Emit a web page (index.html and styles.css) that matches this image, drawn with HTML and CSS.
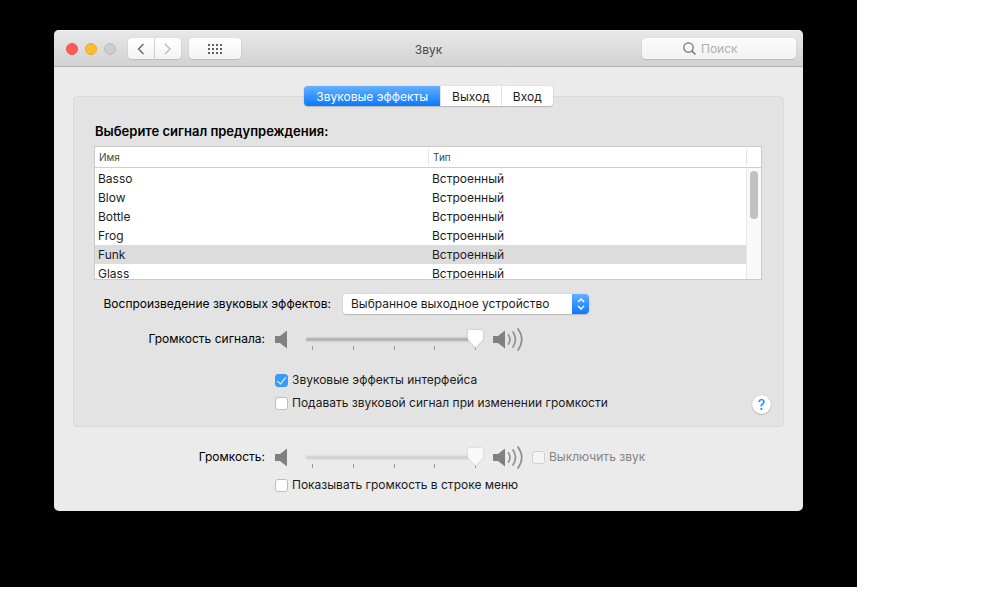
FILE: index.html
```html
<!DOCTYPE html>
<html lang="ru">
<head>
<meta charset="utf-8">
<title>Звук</title>
<link rel="stylesheet" href="styles.css">
</head>
<body>
<svg class="defs" aria-hidden="true">
  <symbol id="quiet" viewBox="0 0 32 24"><path d="M0 9h5l7-5.500v18L5 16H0z" fill="#808080"/></symbol>
  <symbol id="loud" viewBox="0 0 32 24"><path d="M0 9h5l7-5.500v18L5 16H0z" fill="#808080"/><path d="M15.500 8q3 4.500 0 9M20 5q5 7.500 0 15M25 2q7.500 10.500 0 21" fill="none" stroke="#909090" stroke-width="1.700" stroke-linecap="round"/></symbol>
</svg>
<div class="desktop">
  <main class="window">
    <header class="titlebar">
      <div class="lights">
        <button class="light red" aria-label="Закрыть"></button>
        <button class="light yellow" aria-label="Свернуть"></button>
        <button class="light" aria-label="Увеличить" disabled></button>
      </div>
      <div class="nav">
        <button class="tool" aria-label="Назад"><svg width="8" height="12" viewBox="0 0 8 12"><path d="M6.500 1 1.500 6l5 5" fill="none" stroke="#666" stroke-width="1.400"/></svg></button>
        <button class="tool" aria-label="Вперед" disabled><svg width="8" height="12" viewBox="0 0 8 12"><path d="M1 1l5 5-5 5" fill="none" stroke="#b8b8b8" stroke-width="1.400"/></svg></button>
      </div>
      <button class="tool all" aria-label="Показать все"><svg width="14" height="10" viewBox="0 0 14 10"><path d="M0 1h14M0 5h14M0 9h14" stroke="#606060" stroke-width="2" stroke-dasharray="2 2"/></svg></button>
      <h1 class="title">Звук</h1>
      <label class="search"><svg width="13" height="13" viewBox="0 0 13 13"><circle cx="5.500" cy="5.500" r="4.700" fill="none" stroke="#707070" stroke-width="1.200"/><path d="m9 9 3.500 3.500" stroke="#707070" stroke-width="1.400"/></svg><input type="text" placeholder="Поиск" aria-label="Поиск"></label>
    </header>
    <div class="content">
      <div class="tabs" role="tablist">
        <button class="tab active" role="tab" aria-selected="true">Звуковые эффекты</button>
        <button class="tab" role="tab">Выход</button>
        <button class="tab" role="tab">Вход</button>
      </div>
      <section class="panel">
        <h2 class="heading">Выберите сигнал предупреждения:</h2>
        <div class="listbox">
          <table class="sounds">
            <colgroup><col class="col-name"><col><col class="col-scroll"></colgroup>
            <thead><tr><th><span>Имя</span></th><th><span>Тип</span></th><th><span></span></th></tr></thead>
            <tbody>
              <tr><td>Basso</td><td>Встроенный</td><td></td></tr>
              <tr><td>Blow</td><td>Встроенный</td><td></td></tr>
              <tr><td>Bottle</td><td>Встроенный</td><td></td></tr>
              <tr><td>Frog</td><td>Встроенный</td><td></td></tr>
              <tr class="selected"><td>Funk</td><td>Встроенный</td><td></td></tr>
              <tr><td>Glass</td><td>Встроенный</td><td></td></tr>
            </tbody>
          </table>
          <div class="scrollbar"><div class="knob"></div></div>
        </div>
        <div class="output">
          <label class="source" for="device">Воспроизведение звуковых эффектов:</label>
          <div class="popup">
            <select id="device"><option>Выбранное выходное устройство</option></select>
            <span class="arrows"><svg width="8" height="12" viewBox="0 0 8 12"><path d="m1 4 3-3 3 3M1 8l3 3 3-3" fill="none" stroke="#fff" stroke-width="1.400"/></svg></span>
          </div>
        </div>
        <div class="row">
          <label class="name" for="alert">Громкость сигнала:</label>
          <svg class="quiet" width="32" height="24"><use href="#quiet"/></svg>
          <div class="slider"><input id="alert" type="range" value="100"><div class="ticks"><i></i><i></i><i></i><i></i><i></i></div></div>
          <svg width="32" height="24"><use href="#loud"/></svg>
        </div>
        <div class="options">
          <label class="check"><input type="checkbox" checked>Звуковые эффекты интерфейса</label>
          <label class="check"><input type="checkbox">Подавать звуковой сигнал при изменении громкости</label>
          <button class="help" aria-label="Справка">?</button>
        </div>
      </section>
      <section class="master">
        <div class="row">
          <label class="name" for="volume">Громкость:</label>
          <svg class="quiet" width="32" height="24"><use href="#quiet"/></svg>
          <div class="slider"><input id="volume" type="range" value="100" disabled><div class="ticks"><i></i><i></i><i></i><i></i><i></i></div></div>
          <svg width="32" height="24"><use href="#loud"/></svg>
          <label class="check mute"><input type="checkbox" disabled>Выключить звук</label>
        </div>
        <label class="check menu"><input type="checkbox">Показывать громкость в строке меню</label>
      </section>
    </div>
  </main>
</div>
</body>
</html>
```
FILE: styles.css
```css
* { box-sizing: border-box; }
body { margin: 0; background: #fff; color: #1c1c1c; font: 12px/16px Inter, "Liberation Sans", sans-serif; }
button, input, select { font: inherit; color: inherit; margin: 0; padding: 0; border: 0; }
svg { flex: none; display: block; }
.defs { position: absolute; width: 0; height: 0; }
.desktop { margin-right: 143px; padding: 30px 54px 76px; background: #000; }
.window { border-radius: 5px; background: #ebebeb; overflow: hidden; }
.titlebar { display: grid; grid-template-columns: auto auto auto 1fr auto; align-items: center; height: 37px; padding: 0 7px 0 12px; background: linear-gradient(#e8e8e8, #d2d2d2); border-top: 1px solid #f2f2f2; border-bottom: 1px solid #b4b4b4; position: relative; }
.lights { display: flex; gap: 7px; margin-right: 12px; }
.light { width: 12px; height: 12px; border-radius: 50%; background: #cdcdcd; border: 1px solid #bcbcbc; }
.red { background: #ff5c54; border-color: #ec5049; }
.yellow { background: #ffbd2e; border-color: #e9a925; }
.nav { display: flex; gap: 1px; margin-right: 8px; }
.tool { display: flex; align-items: center; justify-content: center; width: 26px; height: 21px; border-radius: 4px; background: linear-gradient(#fff, #f3f3f3); box-shadow: 0 0 1px #bbb, 0 1px 1px #bbb; }
.nav .tool:first-child { border-radius: 4px 0 0 4px; }
.nav .tool:last-child { border-radius: 0 4px 4px 0; }
.tool.all { width: 52px; }
.title { position: absolute; left: 0; right: 0; margin: 0; padding-top: 3px; text-align: center; font-size: 12px; font-weight: 400; color: #4a4a4a; pointer-events: none; }
.search { grid-column: 5; display: flex; align-items: center; gap: 5px; width: 154px; height: 21px; padding-left: 41px; border-radius: 4px; background: linear-gradient(#fcfcfc, #f2f2f2); box-shadow: 0 0 1px #bbb, 0 1px 1px #bbb; }
.search input { width: 70px; background: none; outline: 0; }
.search input::placeholder { color: #b0b0b0; opacity: 1; }
.content { padding: 19px 19px 18px; }
.tabs { position: relative; z-index: 1; display: flex; width: max-content; height: 20px; margin: 0 auto -10px; border-radius: 4px; background: #fff; box-shadow: 0 0 1px #999, 0 1px 1px #bbb; overflow: hidden; }
.tab { padding: 2px 11px 0; background: #fff; border-left: 1px solid #e2e2e2; }
.tab.active { padding: 2px 12px 0; border: 0; background: linear-gradient(#63b0ff, #0a7aff); color: #fff; }
.panel { position: relative; padding: 26px 21px 15px 20px; border: 1px solid #d9d9d9; border-radius: 4px; background: #e3e3e3; }
.heading { margin: 0 0 7px 1px; font-size: 13px; font-weight: 600; color: #000; }
.listbox { position: relative; height: 134px; border: 1px solid #cacaca; background: #fff; overflow: hidden; }
.sounds { width: 100%; table-layout: fixed; border-collapse: separate; border-spacing: 0; }
.col-name { width: 50%; }
.col-scroll { width: 15px; }
th { height: 21px; padding: 0; border-bottom: 1px solid #cfcfcf; text-align: left; font-size: 10px; font-weight: 400; color: #444; }
th span { display: block; height: 16px; padding-left: 4px; }
th + th span { border-left: 1px solid #e4e4e4; }
td { height: 19px; padding: 0 3px; line-height: 19px; }
td + td { padding-left: 4px; }
tbody tr:first-child td { height: 20px; }
.selected { background: #dcdcdc; }
.scrollbar { position: absolute; top: 21px; right: 0; bottom: 0; width: 15px; padding: 3px; background: #f9f9f9; border-left: 1px solid #e8e8e8; }
.knob { width: 8px; height: 48px; border-radius: 4px; background: #c1c1c1; }
.output { display: flex; align-items: center; margin: 14px 0 0 2px; }
.source { width: 235px; margin-right: 12px; text-align: right; color: #000; white-space: nowrap; }
.popup { display: flex; width: 246px; height: 20px; border-radius: 4px; background: #fff; box-shadow: 0 0 1px #999, 0 1px 1px #bbb; position: relative; overflow: hidden; }
.popup select { flex: 1; appearance: none; padding-left: 8px; background: #fff; }
.arrows { position: absolute; right: 0; width: 17px; height: 20px; display: flex; align-items: center; justify-content: center; background: linear-gradient(#63b0ff, #0a7aff); pointer-events: none; }
.row { display: flex; align-items: center; height: 24px; }
.panel .row { margin-top: 13px; }
.name { width: 171px; margin-right: 10px; text-align: right; color: #000; }
.quiet { margin-right: -1px; }
.slider { width: 177px; margin-right: 10px; }
.slider input { appearance: none; display: block; position: relative; width: 100%; height: 18px; background: none; filter: drop-shadow(0 0 1px #bbb); }
.slider input::-webkit-slider-runnable-track { height: 3px; border-radius: 2px; background: #b5b5b5; }
.slider input::-webkit-slider-thumb { appearance: none; width: 15px; height: 18px; margin-top: -8px; background: #fff; clip-path: path("M3 0H12Q15 0 15 3V10L7.500 18L0 10V3Q0 0 3 0Z"); }
.slider input:disabled { filter: drop-shadow(0 0 1px #ccc); }
.slider input:disabled::-webkit-slider-runnable-track { background: #d3d3d3; }
.slider input:disabled::-webkit-slider-thumb { background: #f9f9f9; }
.ticks { display: flex; justify-content: space-between; height: 4px; margin: -2px 7px -2px 6px; }
.ticks i { width: 1px; background: #999; }
.options { display: flex; flex-direction: column; align-items: start; gap: 7px; margin: 21px 0 0 181px; }
.check { display: flex; align-items: center; gap: 4px; white-space: nowrap; }
.check input { appearance: none; width: 13px; height: 13px; border: 1px solid #bdbdbd; border-radius: 3px; background: #fff; }
.check input:checked { display: flex; justify-content: center; border-color: #3b99fc; background: #3b99fc; }
.check input:checked::before { content: ""; box-sizing: border-box; width: 5px; height: 9px; border: solid #fff; border-width: 0 1px 1px 0; transform: rotate(38deg); }
.check input:disabled { background: #f5f5f5; border-color: #d0d0d0; }
.help { position: absolute; right: 12px; bottom: 12px; width: 19px; height: 19px; border-radius: 50%; background: #fff; color: #1f8fff; font-size: 14px; font-weight: 500; box-shadow: 0 0 1px #999, 0 1px 1px #bbb; }
.master { padding: 18px 0 0 21px; }
.mute { margin-left: 7px; color: #858585; }
.menu { margin: 8px 0 0 181px; }
```
